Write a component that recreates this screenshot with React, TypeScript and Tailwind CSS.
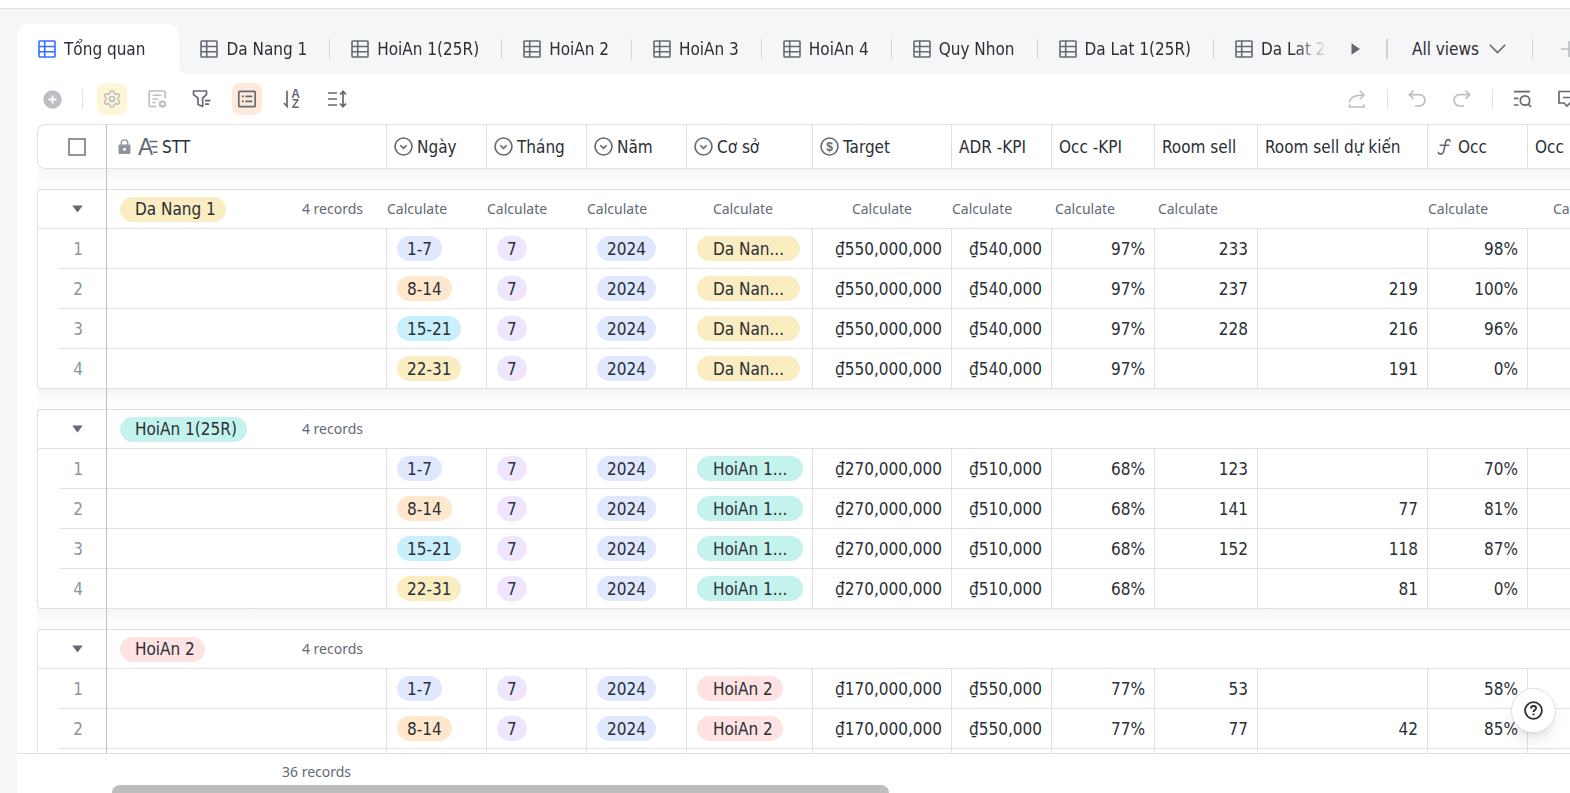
import type { ReactNode } from 'react'
import { Settings } from 'lucide-react'
import clsx from 'clsx'

type Tone = 'blue' | 'orange' | 'cyan' | 'yellow' | 'purple' | 'teal' | 'red'

const toneClass: Record<Tone, string> = {
  blue: 'bg-[#e0e8ff]',
  orange: 'bg-[#fee7cd]',
  cyan: 'bg-[#caeffc]',
  yellow: 'bg-[#faedc2]',
  purple: 'bg-[#efe6fe]',
  teal: 'bg-[#c4f2ec]',
  red: 'bg-[#fee3e2]',
}

type Group = {
  name: string
  short: string
  tone: Tone
  calculate: boolean
  target: string
  adr: string
  occKpi: string
  rows: { sold: string; expected: string; occ: string }[]
}

const views = ['Da Nang 1', 'HoiAn 1(25R)', 'HoiAn 2', 'HoiAn 3', 'HoiAn 4', 'Quy Nhon', 'Da Lat 1(25R)', 'Da Lat 2']

const periods: { label: string; tone: Tone }[] = [
  { label: '1-7', tone: 'blue' },
  { label: '8-14', tone: 'orange' },
  { label: '15-21', tone: 'cyan' },
  { label: '22-31', tone: 'yellow' },
]

const groups: Group[] = [
  {
    name: 'Da Nang 1',
    short: 'Da Nan...',
    tone: 'yellow',
    calculate: true,
    target: '₫550,000,000',
    adr: '₫540,000',
    occKpi: '97%',
    rows: [
      { sold: '233', expected: '', occ: '98%' },
      { sold: '237', expected: '219', occ: '100%' },
      { sold: '228', expected: '216', occ: '96%' },
      { sold: '', expected: '191', occ: '0%' },
    ],
  },
  {
    name: 'HoiAn 1(25R)',
    short: 'HoiAn 1...',
    tone: 'teal',
    calculate: false,
    target: '₫270,000,000',
    adr: '₫510,000',
    occKpi: '68%',
    rows: [
      { sold: '123', expected: '', occ: '70%' },
      { sold: '141', expected: '77', occ: '81%' },
      { sold: '152', expected: '118', occ: '87%' },
      { sold: '', expected: '81', occ: '0%' },
    ],
  },
  {
    name: 'HoiAn 2',
    short: 'HoiAn 2',
    tone: 'red',
    calculate: false,
    target: '₫170,000,000',
    adr: '₫550,000',
    occKpi: '77%',
    rows: [
      { sold: '53', expected: '', occ: '58%' },
      { sold: '77', expected: '42', occ: '85%' },
      { sold: '', expected: '', occ: '' },
    ],
  },
]

function GridIcon() {
  return (
    <svg width="18" height="18" viewBox="0 0 18 18" fill="none" stroke="currentColor" strokeWidth="1.6" aria-hidden="true">
      <rect x="1" y="1" width="16" height="16" rx="0.8" />
      <path d="M6.7 1v16M1 6.5h16M1 11.7h16" />
    </svg>
  )
}

function SelectIcon() {
  return (
    <svg width="19" height="19" viewBox="0 0 19 19" fill="none" stroke="currentColor" strokeWidth="1.6" aria-hidden="true">
      <circle cx="9.5" cy="9.5" r="8.5" />
      <path d="m6.3 8.3 3.2 3.1 3.2-3.1" />
    </svg>
  )
}

function CurrencyIcon() {
  return (
    <svg width="19" height="19" viewBox="0 0 19 19" aria-hidden="true">
      <circle cx="9.5" cy="9.5" r="8.5" fill="none" stroke="currentColor" strokeWidth="1.6" />
      <text x="9.5" y="13.8" textAnchor="middle" fill="currentColor" className="font-['Liberation_Sans'] text-[12px] font-bold">
        $
      </text>
    </svg>
  )
}

function FormulaIcon() {
  return (
    <svg width="19" height="19" viewBox="0 0 19 19" fill="none" stroke="currentColor" strokeWidth="1.6" strokeLinecap="round" aria-hidden="true">
      <path d="M15 4.2c-.2-2-3.600-2.400-4.300.8L8.600 14.500c-.8 3.400-4.600 3.200-5.200 1M5.200 8.200h8.600" />
    </svg>
  )
}

function LockIcon() {
  return (
    <svg width="13" height="16" viewBox="0 0 13 16" aria-hidden="true" className="text-[#8f959e]">
      <path d="M3.2 6V4.2a3.3 3.3 0 0 1 6.6 0V6" fill="none" stroke="currentColor" strokeWidth="1.4" />
      <path d="M1.5 5.5h10a1 1 0 0 1 1 1V14a1 1 0 0 1-1 1h-10a1 1 0 0 1-1-1V6.5a1 1 0 0 1 1-1Z" fill="currentColor" />
      <circle cx="6.5" cy="10.2" r="1.5" fill="#fff" />
    </svg>
  )
}

function TextIcon() {
  return (
    <svg width="20" height="19" viewBox="0 0 20 19" aria-hidden="true" className="overflow-visible">
      <text x="0" y="17.5" fill="currentColor" className="font-['Liberation_Sans'] text-[23px]">
        A
      </text>
      <path d="M11.5 5.2H20M13 10.2h7M14.5 15.2H20" stroke="#fff" strokeWidth="4" />
      <path d="M11.5 4.5h8M13.3 9.8h6.2M15 15.2h4.5" stroke="currentColor" strokeWidth="1.6" />
    </svg>
  )
}

const columns: { label: string; width: string; icon?: ReactNode; calc?: boolean }[] = [
  { label: 'Ngày', width: 'w-[100px]', icon: <SelectIcon />, calc: true },
  { label: 'Tháng', width: 'w-[100px]', icon: <SelectIcon />, calc: true },
  { label: 'Năm', width: 'w-[100px]', icon: <SelectIcon />, calc: true },
  { label: 'Cơ sở', width: 'w-[126px]', icon: <SelectIcon />, calc: true },
  { label: 'Target', width: 'w-[139px]', icon: <CurrencyIcon />, calc: true },
  { label: 'ADR -KPI', width: 'w-[100px]', calc: true },
  { label: 'Occ -KPI', width: 'w-[103px]', calc: true },
  { label: 'Room sell', width: 'w-[103px]', calc: true },
  { label: 'Room sell dự kiến', width: 'w-[170px]' },
  { label: 'Occ', width: 'w-[100px]', icon: <FormulaIcon />, calc: true },
  { label: 'Occ', width: 'w-[125px]', calc: true },
]

function Pill({ tone, className = 'px-2.5', children }: { tone: Tone; className?: string; children: ReactNode }) {
  return <span className={clsx('inline-flex h-[25px] items-center rounded-full', className, toneClass[tone])}>{children}</span>
}

function ToolButton({ label, className, children }: { label: string; className?: string; children: ReactNode }) {
  return (
    <button type="button" aria-label={label} className={clsx('flex h-8 w-[30px] items-center justify-center rounded-lg', className)}>
      {children}
    </button>
  )
}

function ToolDivider() {
  return <span className="-mr-px h-5 w-px bg-[#dee0e3]" />
}

function ViewTabs() {
  return (
    <div className="border-t border-[#dee0e3] bg-[#f5f6f8] pt-[15px] pl-[17px]">
      <div className="flex h-[50px]">
        <nav
          aria-label="Views"
          className="flex min-w-0 flex-1 overflow-hidden [mask-image:linear-gradient(to_right,black_calc(100%-32px),transparent_calc(100%+2px))]"
        >
          <a href="#tong-quan" aria-current="page" className="flex shrink-0 items-center gap-2 rounded-t-xl bg-white pr-[34px] pl-[21px]">
            <span className="text-[#3370ff]">
              <GridIcon />
            </span>
            Tổng quan
          </a>
          <div className="shrink-0 bg-white">
            <div className="flex h-full items-center rounded-bl-lg bg-[#f5f6f8]">
              {views.map((view) => (
                <a
                  key={view}
                  href="#view"
                  className="flex h-5 items-center gap-2 border-r border-[#d0d3d6] pr-[22px] pl-[21px] whitespace-nowrap"
                >
                  <span className="text-[#646a73]">
                    <GridIcon />
                  </span>
                  {view}
                </a>
              ))}
            </div>
          </div>
        </nav>
        <div className="-mr-2 flex shrink-0 items-center">
          <button type="button" aria-label="Scroll views" className="flex w-[60px] justify-center text-[#646a73]">
            <svg width="9" height="12" viewBox="0 0 9 12" fill="currentColor" aria-hidden="true">
              <path d="M.5.3v11.400L9 6Z" />
            </svg>
          </button>
          <span className="h-5 w-0.5 bg-[#d0d3d6]" />
          <button type="button" className="flex items-center gap-2.5 pr-[26px] pl-6">
            All views
            <svg width="17" height="10" viewBox="0 0 17 10" fill="none" stroke="#646a73" strokeWidth="1.6" aria-hidden="true">
              <path d="m.8.8 7.7 7.7L16.2.8" />
            </svg>
          </button>
          <span className="h-5 w-px bg-[#d0d3d6]" />
          <button type="button" aria-label="Add view" className="pl-[27px] text-[#bbbfc4]">
            <svg width="18" height="18" viewBox="0 0 18 18" stroke="currentColor" strokeWidth="1.6" aria-hidden="true">
              <path d="M9 1v16M1 9h16" />
            </svg>
          </button>
        </div>
      </div>
    </div>
  )
}

function Toolbar() {
  return (
    <div className="flex h-[50px] shrink-0 items-center justify-between pl-5 text-[#646a73]">
      <div className="flex items-center gap-[15px]">
        <ToolButton label="Add record" className="text-[#bbbfc4]">
          <svg width="19" height="19" viewBox="0 0 19 19" aria-hidden="true">
            <circle cx="9.5" cy="9.5" r="9.2" fill="currentColor" />
            <path d="M9.5 5.5v8M5.5 9.5h8" stroke="#fff" strokeWidth="1.8" />
          </svg>
        </ToolButton>
        <ToolDivider />
        <ToolButton label="Field settings" className="bg-[#fff5d9] text-[#bbbfc4]">
          <Settings size={20} strokeWidth={1.9} />
        </ToolButton>
        <ToolButton label="Form settings" className="text-[#bbbfc4]">
          <svg width="20" height="20" viewBox="0 0 20 20" fill="none" stroke="currentColor" strokeWidth="1.6" aria-hidden="true">
            <path d="M9.5 17.5H3.2a1 1 0 0 1-1-1V3a1 1 0 0 1 1-1h14a1 1 0 0 1 1 1v6.5M5.500 6.3h9M5.500 10h5.500M5.500 13.600h3" />
            <circle cx="15.5" cy="15" r="2.4" strokeWidth="1.9" />
            <path d="M15.5 10.9v1.5M15.5 17.6v1.5M11.9 12.9l1.3.8M17.8 16.300l1.300.8M11.900 17.100l1.300-.8M17.800 13.700l1.300-.8" />
          </svg>
        </ToolButton>
        <ToolButton label="Filter">
          <svg width="20" height="20" viewBox="0 0 20 20" fill="none" stroke="currentColor" strokeWidth="1.7" strokeLinejoin="round" aria-hidden="true">
            <path d="M1.5 2h13v3.600L10.700 9v8.500L6 15.500V9L1.500 5.600Z" />
            <path d="M13 11.7h5.500M13 15.200h4" />
          </svg>
        </ToolButton>
        <ToolButton label="Group" className="bg-[#feeadc]">
          <svg width="20" height="20" viewBox="0 0 20 20" fill="none" stroke="currentColor" strokeWidth="1.7" aria-hidden="true">
            <rect x="1.8" y="2.3" width="16.4" height="15.4" rx="1" />
            <path d="M4.8 7.3h2M8.3 7.3h7M4.8 12.3h2M8.3 12.3h7" />
          </svg>
        </ToolButton>
        <ToolButton label="Sort">
          <svg width="20" height="20" viewBox="0 0 20 20" aria-hidden="true" className="overflow-visible">
            <path d="M5 1.800v15.500L2 14" fill="none" stroke="currentColor" strokeWidth="1.7" />
            <g fill="currentColor" textAnchor="middle" className="font-['Liberation_Sans'] text-[12px] font-bold">
              <text x="13.5" y="9">
                A
              </text>
              <text x="13.5" y="19">
                Z
              </text>
            </g>
          </svg>
        </ToolButton>
        <ToolButton label="Row height">
          <svg width="20" height="20" viewBox="0 0 20 20" fill="none" stroke="currentColor" strokeWidth="1.7" aria-hidden="true">
            <path d="M1 4h9M1 10h9M1 16h9M16 2.5v15M13 5.5l3-3.200 3 3.200M13 14.500l3 3.200 3-3.200" />
          </svg>
        </ToolButton>
      </div>
      <div className="-mr-3 flex items-center gap-[15px]">
        <ToolButton label="Share" className="text-[#bbbfc4]">
          <svg width="20" height="20" viewBox="0 0 20 20" fill="none" stroke="currentColor" strokeWidth="1.6" aria-hidden="true">
            <path d="M2.5 13.5C3.2 8.2 7 5.8 16.8 6M12.800 1.800 17 6l-4.200 4.200M2.500 15.500V18h14.500v-2.500" />
          </svg>
        </ToolButton>
        <ToolDivider />
        <ToolButton label="Undo" className="text-[#bbbfc4]">
          <svg width="20" height="20" viewBox="0 0 20 20" fill="none" stroke="currentColor" strokeWidth="1.7" aria-hidden="true">
            <path d="M6.5 1.5 2.3 5.7l4.200 4.200M2.500 5.700h9.800a5.600 5.600 0 0 1 0 11.300H8" />
          </svg>
        </ToolButton>
        <ToolButton label="Redo" className="text-[#bbbfc4]">
          <svg width="20" height="20" viewBox="0 0 20 20" fill="none" stroke="currentColor" strokeWidth="1.7" aria-hidden="true">
            <path d="m13.5 1.5 4.200 4.200-4.200 4.200M17.500 5.700H7.700a5.600 5.600 0 0 0 0 11.300H12" />
          </svg>
        </ToolButton>
        <ToolDivider />
        <ToolButton label="Find">
          <svg width="20" height="20" viewBox="0 0 20 20" fill="none" stroke="currentColor" strokeWidth="1.7" aria-hidden="true">
            <path d="M2 2.7h16M2 9.3h4.500M2 16h4.500" />
            <circle cx="13" cy="11.5" r="4.7" />
            <path d="m16 15 3 3" />
          </svg>
        </ToolButton>
        <ToolButton label="Comments">
          <svg width="20" height="20" viewBox="0 0 20 20" fill="none" stroke="currentColor" strokeWidth="1.7" aria-hidden="true">
            <path d="M2 2.5h16V14h-5l-3 3-3-3H2ZM6 8.5h8" />
          </svg>
        </ToolButton>
      </div>
    </div>
  )
}

function Spacer() {
  return (
    <tr aria-hidden="true" className="h-5">
      <td className="border-r border-r-[#bbbfc4] bg-linear-to-b from-[#f5f6f6] to-[#fdfdfd] to-60% p-0" />
      <td colSpan={12} className="bg-linear-to-b from-[#f3f5f4] to-[#fdfdfd] to-60% p-0" />
    </tr>
  )
}

function GroupRows({ group }: { group: Group }) {
  const cell = 'border-r border-b border-[#dee0e3] p-0'
  const number = clsx(cell, 'pr-[9px] text-right')
  const last = group.rows.length - 1

  return (
    <tbody>
      <Spacer />
      <tr className="h-10">
        <th className="rounded-tl border border-[#dee0e3] border-r-[#bbbfc4] p-0 pl-2.5">
          <button type="button" aria-label={`Collapse ${group.name}`} className="flex h-5 w-full items-center justify-center text-[#646a73]">
            <svg width="11" height="8" viewBox="0 0 11 8" fill="currentColor" aria-hidden="true">
              <path d="M.3.5h10.400L5.500 7.500Z" />
            </svg>
          </button>
        </th>
        <th scope="rowgroup" className="border-y border-[#dee0e3] p-0 pr-6 pl-[13px] font-normal">
          <div className="flex items-center justify-between">
            <Pill tone={group.tone} className="pr-2.5 pl-[15px]">
              {group.name}
            </Pill>
            <span className="font-['Noto_Sans'] text-sm text-[#646a73]">4 records</span>
          </div>
        </th>
        {columns.map((column, index) => (
          <td key={index} className="border-y border-[#dee0e3] p-0 pr-10 text-right font-['Noto_Sans'] text-sm text-[#646a73]">
            {group.calculate && column.calc ? <button type="button">Calculate</button> : null}
          </td>
        ))}
      </tr>
      {group.rows.map((row, index) => (
        <tr key={index} className="h-10">
          <td
            className={clsx(
              'border-r border-l border-[#dee0e3] border-r-[#bbbfc4] p-0 text-[#8f959e]',
              index === last && 'rounded-bl border-b',
            )}
          >
            <div
              className={clsx(
                'ml-[22px] flex items-center justify-center pr-2.5',
                index === last ? 'h-[39px]' : 'h-10 border-b border-[#dee0e3]',
              )}
            >
              {index + 1}
            </div>
          </td>
          <td className={cell} />
          <td className={clsx(cell, 'pl-2.5')}>
            <Pill tone={periods[index].tone}>{periods[index].label}</Pill>
          </td>
          <td className={clsx(cell, 'pl-2.5')}>
            <Pill tone="purple">7</Pill>
          </td>
          <td className={clsx(cell, 'pl-2.5')}>
            <Pill tone="blue">2024</Pill>
          </td>
          <td className={clsx(cell, 'pl-2.5')}>
            <Pill tone={group.tone} className={group.short.endsWith('...') ? 'px-4' : 'pr-2.5 pl-4'}>
              {group.short}
            </Pill>
          </td>
          <td className={number}>{group.target}</td>
          <td className={number}>{group.adr}</td>
          <td className={number}>{group.occKpi}</td>
          <td className={number}>{row.sold}</td>
          <td className={number}>{row.expected}</td>
          <td className={number}>{row.occ}</td>
          <td className={cell} />
        </tr>
      ))}
    </tbody>
  )
}

function RecordsTable() {
  return (
    <table className="w-[1615px] table-fixed border-separate border-spacing-0 whitespace-nowrap">
      <colgroup>
        <col className="w-[70px]" />
        <col className="w-[280px]" />
        {columns.map((column, index) => (
          <col key={index} className={column.width} />
        ))}
      </colgroup>
      <thead>
        <tr className="h-[45px] text-left">
          <th className="rounded-l-lg border border-[#dee0e3] border-r-[#bbbfc4] p-0 pl-2.5">
            <input
              type="checkbox"
              aria-label="Select all records"
              className="mx-auto block size-[18px] appearance-none border-2 border-[#8f959e] bg-white"
            />
          </th>
          <th scope="col" className="border-y border-r border-[#dee0e3] p-0 pl-[11px] font-normal">
            <div className="flex items-center text-[#646a73]">
              <LockIcon />
              <span className="mr-1 ml-[7px]">
                <TextIcon />
              </span>
              <span className="text-[#2b2f36]">STT</span>
            </div>
          </th>
          {columns.map((column, index) => (
            <th key={index} scope="col" className="border-y border-r border-[#dee0e3] p-0 pl-[7px] font-normal">
              <div className="flex items-center gap-1 text-[#646a73]">
                {column.icon}
                <span className="text-[#2b2f36]">{column.label}</span>
              </div>
            </th>
          ))}
        </tr>
      </thead>
      {groups.map((group) => (
        <GroupRows key={group.name} group={group} />
      ))}
    </table>
  )
}

export default function App() {
  return (
    <div className="relative flex h-screen flex-col overflow-hidden bg-white pt-2 font-['DejaVu_Sans_Condensed','Noto_Sans',sans-serif] text-[17px] leading-6 text-[#2b2f36]">
      <ViewTabs />
      <main className="flex min-h-0 flex-1 flex-col border-l-[17px] border-[#f5f6f8]">
        <Toolbar />
        <div className="min-h-0 flex-1 overflow-hidden pl-5">
          <RecordsTable />
        </div>
        <footer className="flex h-10 shrink-0 flex-col justify-between border-t border-[#dee0e3] pt-2">
          <p className="pl-[265px] font-['Noto_Sans'] text-sm text-[#646a73]">36 records</p>
          <div className="ml-[95px] h-2 w-1/2 rounded-t-full bg-[#bbbdbf]" />
        </footer>
      </main>
      <button
        type="button"
        aria-label="Help"
        className="absolute right-3.5 bottom-[60px] flex size-[45px] items-center justify-center rounded-full border border-[#dee0e3] bg-white shadow-lg shadow-black/10"
      >
        <svg width="19" height="19" viewBox="0 0 19 19" fill="none" stroke="currentColor" strokeWidth="1.8" aria-hidden="true">
          <circle cx="9.5" cy="9.5" r="8.4" />
          <path d="M6.9 7.600c0-1.600 1.100-2.600 2.600-2.600s2.600.9 2.600 2.300c0 1.700-2.600 1.800-2.600 3.700M9.500 12.600v1.700" />
        </svg>
      </button>
    </div>
  )
}
